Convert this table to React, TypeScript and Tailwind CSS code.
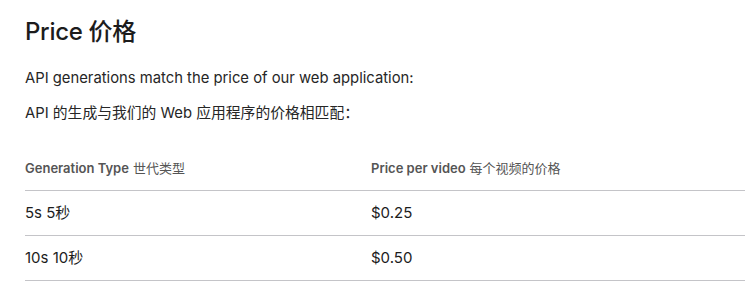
const font = { fontFamily: 'Inter, "Noto Sans CJK SC", sans-serif' };

const rows = [
  { type: '5s 5秒', price: '$0.25' },
  { type: '10s 10秒', price: '$0.50' },
];

export default function App() {
  return (
    <div className="w-[755px] h-[306px] bg-white overflow-hidden text-[#1c1c1c]" style={font}>
      <div className="pl-[25px] pr-[10px] pt-[15px]">
        <h2 className="text-[24px] leading-[34px] font-medium tracking-[-0.3px]">Price 价格</h2>
        <p className="mt-[17px] text-[14.8px] leading-[24px] text-[#262626]">
          API generations match the price of our web application:
        </p>
        <p className="mt-[11px] text-[14.8px] leading-[24px] text-[#262626]">
          API 的生成与我们的 Web 应用程序的价格相匹配：
        </p>

        <div className="mt-[23px] grid grid-cols-[346px_1fr] text-[15px]">
          <div className="h-[43px] flex items-center border-b border-[#c4c4c8] text-[13px] font-semibold text-[#555]">
            Generation Type <span className="font-normal ml-1">世代类型</span>
          </div>
          <div className="h-[43px] flex items-center border-b border-[#c4c4c8] text-[13px] font-semibold text-[#555]">
            Price per video <span className="font-normal ml-1">每个视频的价格</span>
          </div>
          {rows.map((r) => (
            <div key={r.type} className="contents">
              <div className="h-[45px] pt-[1px] flex items-center border-b border-[#c4c4c8]">{r.type}</div>
              <div className="h-[45px] pt-[1px] flex items-center border-b border-[#c4c4c8]">{r.price}</div>
            </div>
          ))}
        </div>
      </div>
    </div>
  );
}
